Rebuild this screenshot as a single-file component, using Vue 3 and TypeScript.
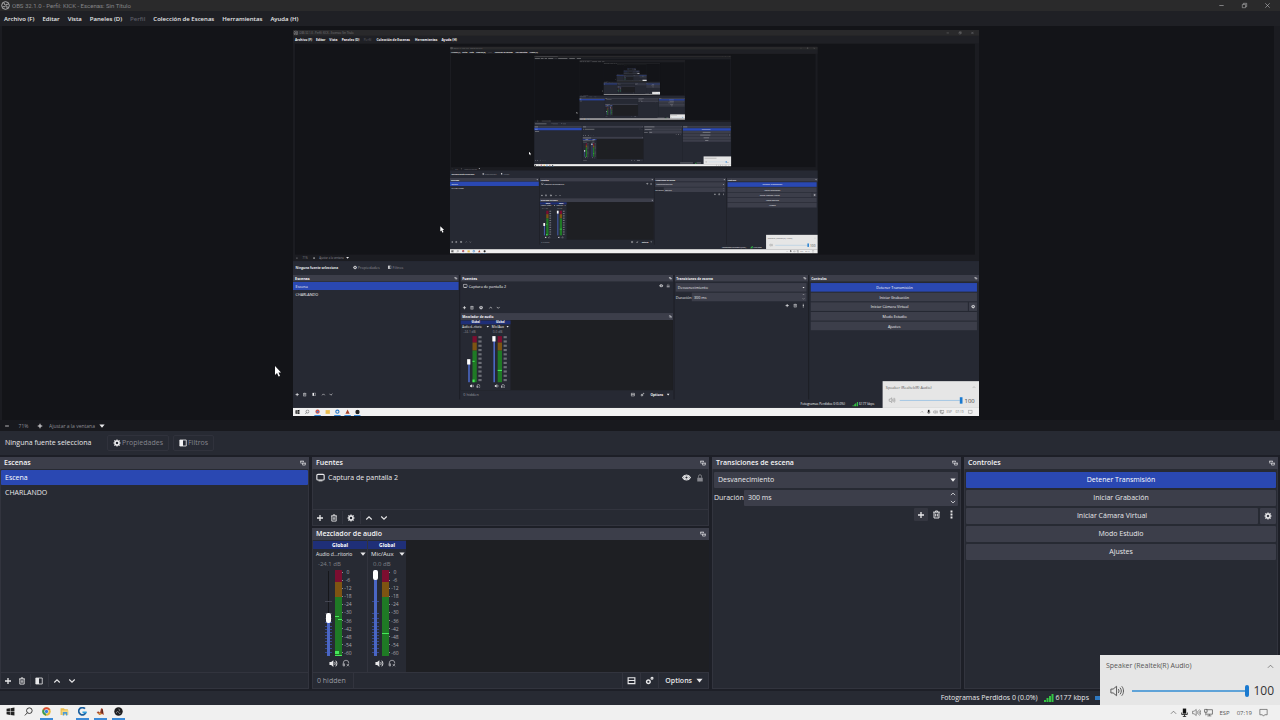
<script setup lang="ts">
import { h, ref } from 'vue'
import type { FunctionalComponent } from 'vue'

type Shape = { d: string; fill?: boolean; w?: number }

const shapes: Record<string, Shape[]> = {
  obs: [
    { d: 'M8 1.2a6.8 6.8 0 1 0 0 13.6A6.8 6.8 0 1 0 8 1.2z', w: 1.4 },
    { d: 'M5.2 3.6c.2 2 1.4 3.2 3.2 3.6M12.8 6.2c-1.8-.8-3.4-.4-4.4 1M10.6 12.6c.6-2 0-3.6-1.6-4.6M3.2 9.6c1.6 1 3.4.8 4.8-.4', w: 1.6 },
  ],
  obsDark: [
    { d: 'M8 .8a7.2 7.2 0 1 0 0 14.4A7.2 7.2 0 1 0 8 .8z', fill: true },
    { d: 'M8 3.500v3M4.500 11l2.500-2M11.500 11L9 9', w: 1 },
  ],
  min: [{ d: 'M3 8h10', w: 1.3 }],
  max: [{ d: 'M3 5.500h7.500v7.500H3zM5.500 5.500V3H13v7.500h-2.500', w: 1.2 }],
  close: [{ d: 'M3 3l10 10M13 3L3 13', w: 1.3 }],
  minus: [{ d: 'M3 8h10', w: 2 }],
  plus: [{ d: 'M8 2v12M2 8h12', w: 2.6 }],
  trash: [{ d: 'M2 3.800h12M6 3.500V1.800h4v1.700M3.600 4v10.200h8.800V4M6.500 6.500v5M9.500 6.500v5', w: 1.7 }],
  gear: [
    { d: 'M8 4a4 4 0 1 0 0 8 4 4 0 1 0 0-8z', w: 3 },
    { d: 'M8 .8v3M8 12.200v3M.8 8h3M12.200 8h3M2.900 2.900l2.200 2.200M10.900 10.900l2.200 2.200M13.100 2.900l-2.200 2.200M5.100 10.900l-2.200 2.200', w: 2.4 },
  ],
  gears: [
    { d: 'M6 7a3.200 3.200 0 1 0 0 6.400A3.200 3.200 0 1 0 6 7z', w: 2.6 },
    { d: 'M12.400 2.200a1.700 1.700 0 1 0 0 3.400 1.700 1.700 0 1 0 0-3.400z', w: 2 },
  ],
  up: [{ d: 'M2.500 11L8 5.500l5.500 5.500', w: 2.2 }],
  down: [{ d: 'M2.500 5L8 10.500 13.500 5', w: 2.2 }],
  caret: [{ d: 'M1 4h14l-7 8.500z', fill: true }],
  dots: [{ d: 'M6.300 1h3.400v3.400H6.300zM6.300 6.300h3.400v3.400H6.300zM6.300 11.600h3.400V15H6.300z', fill: true }],
  filter: [
    { d: 'M1.500 2h13v12h-13z', w: 1.6 },
    { d: 'M2 2h6v12H2z', fill: true },
  ],
  float: [
    { d: 'M1 2h9v2H1zM6 7h9v2H6z', fill: true },
    { d: 'M1.800 2.500v6H5M9.200 3v3M6.800 7.500v6h7.400v-6', w: 1.6 },
  ],
  display: [
    { d: 'M3.500 2.500h9a2 2 0 0 1 2 2v6a2 2 0 0 1-2 2h-9a2 2 0 0 1-2-2v-6a2 2 0 0 1 2-2z', w: 2 },
    { d: 'M4.500 13h7v1.800h-7z', fill: true },
  ],
  eye: [
    { d: 'M1 8c1.600-3 4-4.500 7-4.500S13.400 5 15 8c-1.600 3-4 4.500-7 4.500S2.600 11 1 8z', w: 1.8 },
    { d: 'M8 5.200a2.800 2.800 0 1 0 0 5.600 2.800 2.800 0 1 0 0-5.600z', w: 1.8 },
    { d: 'M3 6l2-1.500v7L3 10zM13 6l-2-1.500v7l2-1.500z', fill: true },
  ],
  lock: [
    { d: 'M2.500 7.500h11V15h-11z', fill: true },
    { d: 'M5 7.500V4.500a3 3 0 0 1 6 0v3', w: 1.7 },
  ],
  layout: [{ d: 'M2 3h12v10.500H2zM2 8h12', w: 2 }],
  speaker: [
    { d: 'M.8 5.500h3l4-3.500v12l-4-3.500h-3z', fill: true },
    { d: 'M10 5.500c1.200 1.600 1.200 3.400 0 5M12 3c2.600 3 2.600 7 0 10', w: 1.7 },
  ],
  monitor: [
    { d: 'M2.500 13V8a5.500 5.500 0 0 1 11 0v1M2.500 9.500H5V14H2.500zM9.500 10l4.500 4.500M14 10l-4.500 4.500', w: 1.7 },
  ],
  volume: [
    { d: 'M1 5.800h2.600L7.500 2.600v10.800L3.600 10.200H1zM9.500 5.800c1 1.300 1 3.100 0 4.400M11.500 4.200c1.900 2.200 1.900 5.400 0 7.600M13.400 2.600c2.700 3 2.700 7.800 0 10.800', w: 1.1 },
  ],
  thinUp: [{ d: 'M2 11l6-6 6 6', w: 1.5 }],
  mic: [
    { d: 'M5 1h6v9H5z', fill: true },
    { d: 'M3 8v3.500h10V8M8 11.500V15M5 15h6', w: 1.4 },
  ],
  network: [{ d: 'M4 3h11v8H4M1 2.500h4.500v5H1zM3.200 7.500V13M9.500 11v3M6 14h7', w: 1.3 }],
  notice: [{ d: 'M1.500 2.500h13v9.500H10l-2 2.500-2-2.500H1.500z', w: 1.2 }],
  windows: [{ d: 'M1 3l6-.9v5.500H1zM8 2l7-1v6.600H8zM1 8.500h6v5.500L1 13zM8 8.500h7V15l-7-1z', fill: true }],
  search: [{ d: 'M9.500 1.500a5 5 0 1 0 0 10 5 5 0 1 0 0-10zM6 10.200L1.500 15', w: 1.5 }],
}

const Icon: FunctionalComponent<{ name: string }> = (props) =>
  h(
    'svg',
    { class: 'icon', viewBox: '0 0 16 16', 'aria-hidden': 'true' },
    shapes[props.name].map((s) =>
      h('path', {
        d: s.d,
        fill: s.fill ? 'currentColor' : 'none',
        'fill-rule': 'evenodd',
        stroke: s.fill ? 'none' : 'currentColor',
        'stroke-width': s.w ?? 1.5,
      }),
    ),
  )
Icon.props = ['name']

const menus = [
  { label: 'Archivo (F)' },
  { label: 'Editar' },
  { label: 'Vista' },
  { label: 'Paneles (D)' },
  { label: 'Perfil', disabled: true },
  { label: 'Colección de Escenas' },
  { label: 'Herramientas' },
  { label: 'Ayuda (H)' },
]
const scenes = ['Escena', 'CHARLANDO']
const activeScene = ref('Escena')
const zoomMode = ref('Ajustar a la ventana')
const transition = ref('Desvanecimiento')
const duration = ref('300 ms')
const volume = ref(100)

const channels = ref([
  { name: 'Audio d...ritorio', db: '-24.1 dB', level: 43, wide: true, peaks: [46, 49, 81, 85] },
  { name: 'Mic/Aux', db: '0.0 dB', level: 100, wide: false, peaks: [63] },
])
const scale = [0, -6, -12, -18, -24, -30, -36, -42, -48, -54, -60]
const ticks = [31, 43, 48, 52, 56, 59, 62, 65, 68, 71, 74, 78, 82]

// Nested copies of the captured desktop, each drawn in 1280 x 720 units.
const ratio = 0.536
const levels = Array.from({ length: 8 }, (_, n) => {
  const s = ratio ** n
  const offset = (1 - s) / (1 - ratio)
  return { n, x: 293 * offset, y: 31 * offset, w: 1280 * s, h: 720 * s }
})

type Box = [number, number, number, number, string]
const boxes: Box[] = [
  [0, 0, 1280, 720, '#1b1c21'],
  [0, 0, 1280, 11, '#29292b'],
  [0, 11, 1280, 14, '#1f2025'],
  [4, 26, 1268, 393, '#131418'],
  [0, 431, 1280, 274, '#262933'],
  [0, 457, 309, 12, '#3c3e4a'],
  [313, 457, 396, 12, '#3c3e4a'],
  [712, 457, 249, 12, '#3c3e4a'],
  [964, 457, 316, 12, '#3c3e4a'],
  [313, 528, 396, 13, '#3c3e4a'],
  [0, 470, 309, 15, '#2a48b2'],
  [313, 541, 396, 131, '#1e1f23'],
  [313, 541, 93, 131, '#262933'],
  [313, 542, 93, 7, '#1f2f78'],
  [310, 457, 2, 232, '#1d1f26'],
  [710, 457, 2, 232, '#1d1f26'],
  [961, 457, 2, 232, '#1d1f26'],
  [714, 472, 244, 16, '#3c3e4a'],
  [744, 490, 214, 16, '#3c3e4a'],
  [966, 472, 310, 16, '#2a48b2'],
  [966, 490, 310, 16, '#3c3e4a'],
  [966, 508, 293, 16, '#3c3e4a'],
  [1261, 508, 15, 16, '#3c3e4a'],
  [966, 526, 310, 16, '#3c3e4a'],
  [966, 544, 310, 16, '#3c3e4a'],
  [335, 571, 8, 12, '#7c0e30'],
  [335, 583, 8, 15, '#7e5412'],
  [335, 598, 8, 59, '#1f7a25'],
  [382, 571, 8, 12, '#7c0e30'],
  [382, 583, 8, 15, '#7e5412'],
  [382, 598, 8, 59, '#1f7a25'],
  [335, 617, 4, 2, '#46e85a'],
  [335, 652, 4, 5, '#46e85a'],
  [382, 634, 8, 2, '#46e85a'],
  [327, 620, 3, 37, '#4a66c4'],
  [374, 572, 3, 85, '#4a66c4'],
  [325, 614, 6, 10, '#ffffff'],
  [372, 571, 6, 10, '#ffffff'],
  [0, 705, 1280, 15, '#f0f0f0'],
  [1100, 655, 180, 50, '#e6e6e6'],
  [1132, 690, 112, 2, '#a9c9e4'],
  [1244, 685, 5, 12, '#1a7ad0'],
]
type Label = [number, number, string, string, number, boolean?]
const labels: Label[] = [
  [12, 8, 'OBS 32.1.0 - Perfil: KICK - Escenas: Sin Título', '#77777a', 5],
  [4, 21, 'Archivo (F)', '#f4f4f6', 6, true],
  [43, 21, 'Editar', '#f4f4f6', 6, true],
  [68, 21, 'Vista', '#f4f4f6', 6, true],
  [91, 21, 'Paneles (D)', '#f4f4f6', 6, true],
  [132, 21, 'Perfil', '#606168', 6],
  [156, 21, 'Colección de Escenas', '#f4f4f6', 6, true],
  [228, 21, 'Herramientas', '#f4f4f6', 6, true],
  [277, 21, 'Ayuda (H)', '#f4f4f6', 6, true],
  [18, 428, '71%', '#8d8e95', 5],
  [49, 428, 'Ajustar a la ventana', '#8d8e95', 5],
  [5, 446, 'Ninguna fuente selecciona', '#e8e8ea', 6, true],
  [121, 446, 'Propiedades', '#8d8e95', 7],
  [186, 446, 'Filtros', '#8d8e95', 7],
  [4, 466, 'Escenas', '#f4f4f6', 7, true],
  [316, 466, 'Fuentes', '#f4f4f6', 7, true],
  [715, 466, 'Transiciones de escena', '#f4f4f6', 6, true],
  [967, 466, 'Controles', '#f4f4f6', 6, true],
  [316, 538, 'Mezclador de audio', '#f4f4f6', 6, true],
  [5, 481, 'Escena', '#f4f4f6', 7],
  [5, 496, 'CHARLANDO', '#f4f4f6', 7],
  [328, 481, 'Captura de pantalla 2', '#f4f4f6', 7],
  [718, 483, 'Desvanecimiento', '#e8e8ea', 7],
  [714, 501, 'Duración', '#e8e8ea', 7],
  [748, 501, '300 ms', '#e8e8ea', 7],
  [1088, 483, 'Detener Transmisión', '#ffffff', 7],
  [1094, 501, 'Iniciar Grabación', '#f4f4f6', 7],
  [1078, 519, 'Iniciar Cámara Virtual', '#f4f4f6', 7],
  [1100, 537, 'Modo Estudio', '#f4f4f6', 7],
  [1110, 555, 'Ajustes', '#f4f4f6', 7],
  [333, 547, 'Global', '#ffffff', 5, true],
  [379, 547, 'Global', '#ffffff', 5, true],
  [316, 556, 'Audio d...ritorio', '#f4f4f6', 5],
  [371, 556, 'Mic/Aux', '#f4f4f6', 6],
  [318, 566, '-24.1 dB', '#8d8e95', 6],
  [373, 566, '0.0 dB', '#8d8e95', 6],
  [318, 683, '0 hidden', '#9a9ba2', 7],
  [667, 683, 'Options', '#f4f4f6', 6, true],
  [947, 700, 'Fotogramas Perdidos 0 (0.0%)', '#f4f4f6', 6],
  [1056, 700, '6177 kbps', '#f4f4f6', 6],
  [1106, 669, 'Speaker (Realtek(R) Audio)', '#5a5a5a', 7],
  [1253, 696, '100', '#444444', 11],
  [1219, 715, 'ESP', '#777777', 6],
  [1236, 715, '07:19', '#777777', 6],
]
type Mark = [string, number, number, number, string]
const lt = '#f0f0f2'
const marks: Mark[] = [
  ['obs', 1, 1, 9, '#b5b5b8'],
  ['min', 1218, 2, 7, '#a5a5a8'],
  ['max', 1241, 2, 7, '#a5a5a8'],
  ['close', 1264, 2, 7, '#a5a5a8'],
  ['minus', 5, 423, 5, lt],
  ['plus', 37, 423, 5, lt],
  ['caret', 99, 422, 6, lt],
  ['gear', 112, 439, 8, lt],
  ['filter', 177, 439, 7, lt],
  ['float', 301, 460, 6, lt],
  ['float', 701, 460, 6, lt],
  ['float', 952, 460, 6, lt],
  ['float', 1271, 460, 6, lt],
  ['float', 701, 532, 6, lt],
  ['display', 317, 473, 9, lt],
  ['eye', 683, 473, 8, lt],
  ['lock', 696, 473, 8, '#8d8e95'],
  ['plus', 316, 514, 8, lt],
  ['trash', 330, 514, 8, lt],
  ['gear', 347, 514, 8, lt],
  ['up', 365, 514, 8, lt],
  ['down', 379, 514, 8, lt],
  ['caret', 361, 551, 5, lt],
  ['caret', 398, 551, 5, lt],
  ['caret', 950, 478, 5, lt],
  ['up', 950, 491, 5, lt],
  ['down', 950, 499, 5, lt],
  ['plus', 918, 510, 8, lt],
  ['trash', 933, 510, 8, lt],
  ['dots', 948, 510, 8, lt],
  ['gear', 1265, 512, 8, lt],
  ['speaker', 330, 660, 8, lt],
  ['monitor', 342, 660, 8, lt],
  ['speaker', 376, 660, 8, lt],
  ['monitor', 388, 660, 8, lt],
  ['plus', 4, 676, 8, lt],
  ['trash', 18, 676, 8, lt],
  ['filter', 36, 676, 7, lt],
  ['up', 53, 676, 8, lt],
  ['down', 67, 676, 8, lt],
  ['layout', 630, 676, 8, lt],
  ['gears', 648, 676, 8, lt],
  ['caret', 697, 677, 6, lt],
  ['volume', 1111, 684, 13, '#777777'],
  ['thinUp', 1267, 663, 7, '#777777'],
  ['windows', 4, 708, 9, '#111111'],
  ['search', 22, 708, 9, '#333333'],
  ['obsDark', 116, 708, 9, '#222222'],
  ['thinUp', 1170, 709, 7, '#555555'],
  ['mic', 1182, 708, 8, '#111111'],
  ['volume', 1194, 708, 9, '#555555'],
  ['network', 1206, 708, 9, '#555555'],
  ['notice', 1259, 708, 9, '#555555'],
]
</script>

<template>
  <div class="desktop">
    <header class="titlebar">
      <Icon name="obs" class="app-icon" />
      <span class="title">OBS 32.1.0 - Perfil: KICK - Escenas: Sin Título</span>
      <button class="win-btn" aria-label="Minimizar"><Icon name="min" class="i7" /></button>
      <button class="win-btn" aria-label="Restaurar"><Icon name="max" class="i7" /></button>
      <button class="win-btn" aria-label="Cerrar"><Icon name="close" class="i7" /></button>
    </header>

    <nav class="menubar">
      <button v-for="m in menus" :key="m.label" :disabled="m.disabled">{{ m.label }}</button>
    </nav>

    <main class="preview">
      <svg class="capture" viewBox="0 0 1280 720" role="img" aria-label="Captura de pantalla 2">
        <svg
          v-for="l in levels"
          :key="l.n"
          :x="l.x"
          :y="l.y"
          :width="l.w"
          :height="l.h"
          viewBox="0 0 1280 720"
        >
          <rect v-for="(b, i) in boxes" :key="i" :x="b[0]" :y="b[1]" :width="b[2]" :height="b[3]" :fill="b[4]" />
          <template v-if="l.n < 2">
            <text
              v-for="(t, i) in labels"
              :key="i"
              :x="t[0]"
              :y="t[1]"
              :fill="t[3]"
              :font-size="t[4]"
              :font-weight="t[5] ? 700 : 400"
            >{{ t[2] }}</text>
          </template>
          <template v-else>
            <rect
              v-for="(t, i) in labels"
              :key="i"
              :x="t[0]"
              :y="t[1] - 5"
              :width="t[2].length * 3"
              height="5"
              :fill="t[3]"
              opacity="0.4"
            />
          </template>
          <g v-if="l.n < 4">
            <svg
              v-for="(m, i) in marks"
              :key="i"
              :x="m[1]"
              :y="m[2]"
              :width="m[3]"
              :height="m[3]"
              viewBox="0 0 16 16"
            >
              <path
                v-for="(s, k) in shapes[m[0]]"
                :key="k"
                :d="s.d"
                :fill="s.fill ? m[4] : 'none'"
                :stroke="s.fill ? 'none' : m[4]"
                :stroke-width="s.w ?? 1.5"
                fill-rule="evenodd"
              />
            </svg>
            <path d="M1044 700h2v2h-2zM1047 698h2v4h-2zM1049 696h2v6h-2zM1052 694h2v8h-2z" fill="#35c544" />
            <circle cx="46" cy="712" r="4" fill="#d9503c" />
            <circle cx="46" cy="712" r="2" fill="#3b7fe0" />
            <rect x="61" y="709" width="8" height="7" fill="#e9bd4f" />
            <circle cx="83" cy="712" r="3" fill="none" stroke="#2878c8" stroke-width="2" />
            <path d="M98 716l4-8 4 8z" fill="#a5432a" />
            <path d="M40 718h12v2H40zM77 718h12v2H77zM96 718h12v2H96zM114 718h12v2h-12z" fill="#3a8ad8" />
            <g v-for="x in [347, 394]" :key="x">
              <rect v-for="k in 11" :key="k" :x="x - 1" :y="563 + k * 8" width="6" height="4" fill="#8d8e95" opacity="0.7" />
            </g>
          </g>
          <path d="M275 366v10l2-2 2 4 2-1-2-4h3z" fill="#ffffff" />
        </svg>
      </svg>
    </main>

    <div class="zoombar">
      <button aria-label="Alejar"><Icon name="minus" class="i6" /></button>
      <span class="zoom-value">71%</span>
      <button aria-label="Acercar"><Icon name="plus" class="i6" /></button>
      <span class="select-wrap zoom-select">
        <select v-model="zoomMode" aria-label="Modo de escala">
          <option>Ajustar a la ventana</option>
        </select>
        <Icon name="caret" class="i6 caret" />
      </span>
    </div>

    <div class="source-bar">
      <span class="source-name">Ninguna fuente selecciona</span>
      <button class="ghost"><Icon name="gear" class="i8 white" />Propiedades</button>
      <button class="ghost"><Icon name="filter" class="i8 white" />Filtros</button>
    </div>

    <div class="docks">
      <section class="dock">
        <h2>Escenas<button aria-label="Desacoplar Escenas"><Icon name="float" class="i6" /></button></h2>
        <ul class="scenes">
          <li v-for="s in scenes" :key="s">
            <button :class="{ active: s === activeScene }" @click="activeScene = s">{{ s }}</button>
          </li>
        </ul>
        <div class="tools">
          <button aria-label="Añadir escena"><Icon name="plus" class="i8" /></button>
          <button aria-label="Eliminar escena"><Icon name="trash" class="i8" /></button>
          <button class="sep" aria-label="Filtros de escena"><Icon name="filter" class="i8" /></button>
          <button class="sep" aria-label="Subir escena"><Icon name="up" class="i8" /></button>
          <button aria-label="Bajar escena"><Icon name="down" class="i8" /></button>
        </div>
      </section>

      <div class="stack">
        <section class="dock sources">
          <h2>Fuentes<button aria-label="Desacoplar Fuentes"><Icon name="float" class="i6" /></button></h2>
          <div class="source-list">
            <div class="source">
              <Icon name="display" class="i9" />
              <span>Captura de pantalla 2</span>
              <button aria-label="Visibilidad"><Icon name="eye" class="i9" /></button>
              <button class="dim" aria-label="Bloquear"><Icon name="lock" class="i8" /></button>
            </div>
          </div>
          <div class="tools">
            <button aria-label="Añadir fuente"><Icon name="plus" class="i8" /></button>
            <button aria-label="Eliminar fuente"><Icon name="trash" class="i8" /></button>
            <button class="sep" aria-label="Propiedades de la fuente"><Icon name="gear" class="i8" /></button>
            <button class="sep" aria-label="Subir fuente"><Icon name="up" class="i8" /></button>
            <button aria-label="Bajar fuente"><Icon name="down" class="i8" /></button>
          </div>
        </section>

        <section class="dock mixer">
          <h2>Mezclador de audio<button aria-label="Desacoplar Mezclador"><Icon name="float" class="i6" /></button></h2>
          <div class="channels">
            <div v-for="c in channels" :key="c.name" class="channel" :class="{ wide: c.wide }">
              <div class="global">Global</div>
              <button class="channel-name"><span>{{ c.name }}</span><Icon name="caret" class="i6" /></button>
              <div class="db">{{ c.db }}</div>
              <div class="meter-row">
                <div class="fader">
                  <svg class="fader-track" viewBox="0 0 9 86" aria-hidden="true">
                    <rect x="4" y="1" width="1" height="84" fill="#15161a" />
                    <rect v-for="t in ticks" :key="t" x="1" :y="t" width="7" height="1" :fill="t > 86 - c.level * 0.86 ? '#35488f' : '#454753'" />
                    <rect x="3" :y="86 - c.level * 0.86" width="3" :height="c.level * 0.86" fill="#4a66c4" />
                  </svg>
                  <input v-model.number="c.level" type="range" min="0" max="100" :aria-label="'Volumen de ' + c.name" />
                </div>
                <svg class="meter" viewBox="0 0 9 86" aria-hidden="true">
                  <rect x="1" y="0" width="7" height="12" fill="#7c0e30" />
                  <rect x="1" y="12" width="7" height="15" fill="#7e5412" />
                  <rect x="1" y="27" width="7" height="59" fill="#1f7a25" />
                  <rect v-for="(p, i) in c.peaks" :key="p" :x="i === 1 ? 4 : 1" :y="p" :width="c.peaks.length > 1 && i < 3 ? 4 : 7" :height="i === 2 ? 3 : 1" fill="#46e85a" />
                  <rect v-for="k in 11" :key="k" x="8" :y="k * 8 - 6" width="1" height="1" fill="#8d8e95" />
                </svg>
                <div class="scale"><span v-for="n in scale" :key="n">{{ n }}</span></div>
              </div>
              <div class="channel-btns">
                <button aria-label="Silenciar"><Icon name="speaker" class="i9" /></button>
                <button aria-label="Monitorizar"><Icon name="monitor" class="i8 gray" /></button>
              </div>
            </div>
          </div>
          <div class="mixer-foot">
            <button class="hidden-count">0 hidden</button>
            <button class="foot-btn" aria-label="Disposición"><Icon name="layout" class="i9" /></button>
            <button class="foot-btn" aria-label="Propiedades avanzadas"><Icon name="gears" class="i9" /></button>
            <button class="options">Options<Icon name="caret" class="i7" /></button>
          </div>
        </section>
      </div>

      <section class="dock">
        <h2>Transiciones de escena<button aria-label="Desacoplar Transiciones"><Icon name="float" class="i6" /></button></h2>
        <div class="form">
          <span class="select-wrap field">
            <select v-model="transition" aria-label="Transición"><option>Desvanecimiento</option></select>
            <Icon name="caret" class="i6 caret" />
          </span>
          <div class="duration">
            <label for="duration">Duración</label>
            <div class="field spin">
              <input id="duration" v-model="duration" type="text" />
              <span class="steps">
                <button aria-label="Aumentar"><Icon name="up" class="i6" /></button>
                <button aria-label="Reducir"><Icon name="down" class="i6" /></button>
              </span>
            </div>
          </div>
          <div class="transition-tools">
            <button class="boxed" aria-label="Añadir transición"><Icon name="plus" class="i8" /></button>
            <button aria-label="Eliminar transición"><Icon name="trash" class="i9" /></button>
            <button aria-label="Más opciones"><Icon name="dots" class="i9" /></button>
          </div>
        </div>
      </section>

      <section class="dock">
        <h2>Controles<button aria-label="Desacoplar Controles"><Icon name="float" class="i6" /></button></h2>
        <div class="controls">
          <button class="primary">Detener Transmisión</button>
          <button>Iniciar Grabación</button>
          <div class="pair">
            <button>Iniciar Cámara Virtual</button>
            <button class="cog" aria-label="Configurar cámara virtual"><Icon name="gear" class="i8" /></button>
          </div>
          <button>Modo Estudio</button>
          <button>Ajustes</button>
        </div>
      </section>
    </div>

    <footer class="status">
      <span>Fotogramas Perdidos 0 (0.0%)</span>
      <span class="rate">
        <svg class="signal" viewBox="0 0 10 8" aria-hidden="true">
          <path d="M0 6h2v2H0zM2.500 4h2v4h-2zM5 2h2v6H5zM7.500 0h2v8h-2z" fill="#35c544" />
        </svg>
        6177 kbps
      </span>
      <i class="cpu"></i>
    </footer>

    <div class="taskbar">
      <div class="apps">
        <button aria-label="Inicio"><Icon name="windows" class="i9" /></button>
        <button aria-label="Buscar"><Icon name="search" class="i9" /></button>
        <button class="open" aria-label="Chrome">
          <svg class="i9" viewBox="0 0 16 16">
            <circle cx="8" cy="8" r="7.500" fill="#e8b93a" />
            <path d="M8 8L1.500 4.200A7.500 7.500 0 0 1 14.500 4.200L14.800 5H8z" fill="#d94a3a" />
            <path d="M8 8L1.500 4.200A7.500 7.500 0 0 0 7 15.400z" fill="#3a9a55" />
            <circle cx="8" cy="8" r="3.800" fill="#fff" />
            <circle cx="8" cy="8" r="2.900" fill="#3b7fe0" />
          </svg>
        </button>
        <button aria-label="Explorador">
          <svg class="i9" viewBox="0 0 16 16">
            <path d="M1 2h6l1.500 2H14v10H1z" fill="#e9bd4f" />
            <path d="M3 6h12v8H3z" fill="#f6d981" />
            <path d="M5 9h8v6h-2.500v-3h-3v3H5z" fill="#4b9bd6" />
          </svg>
        </button>
        <button class="open" aria-label="Logitech G">
          <svg class="i9" viewBox="0 0 16 16">
            <path d="M12.500 3A6.500 6.500 0 1 0 14 9.500" fill="none" stroke="#1b5f9e" stroke-width="3" />
            <path d="M8 8h7.500v3H8z" fill="#2fa0e0" />
          </svg>
        </button>
        <button class="open" aria-label="Juego">
          <svg class="i9" viewBox="0 0 16 16">
            <path d="M1 9l4-1 2 2 2-8 3 1 2 11-4-2-4 2z" fill="#a5432a" />
            <path d="M2 12l6-2 2 4z" fill="#d99a3a" />
            <path d="M10 4l2 1v6l-2-1z" fill="#4a211a" />
          </svg>
        </button>
        <button class="open" aria-label="OBS">
          <svg class="i9" viewBox="0 0 16 16">
            <circle cx="8" cy="8" r="7.500" fill="#1d1d1f" />
            <path d="M8 3.500c2 .4 2.400 2.400 1 4M4.500 11c-.6-2 1-3.400 3-2.800M11.600 11c-1.600 1.200-3.200.4-3.400-1.800" fill="none" stroke="#b8b8ba" stroke-width="1.200" />
          </svg>
        </button>
      </div>
      <div class="tray">
        <button aria-label="Iconos ocultos"><Icon name="thinUp" class="i7" /></button>
        <button aria-label="Micrófono" class="black"><Icon name="mic" class="i9" /></button>
        <button aria-label="Volumen"><Icon name="volume" class="i9" /></button>
        <button aria-label="Red"><Icon name="network" class="i9" /></button>
        <span class="lang">ESP</span>
        <time>07:19</time>
        <button aria-label="Notificaciones"><Icon name="notice" class="i9" /></button>
      </div>
    </div>

    <aside class="volume">
      <div class="volume-head">
        <label for="volume">Speaker (Realtek(R) Audio)</label>
        <button aria-label="Expandir"><Icon name="thinUp" class="i7" /></button>
      </div>
      <div class="volume-body">
        <Icon name="volume" class="i14" />
        <input id="volume" v-model.number="volume" type="range" min="0" max="100" />
        <output for="volume">{{ volume }}</output>
      </div>
    </aside>

    <svg class="pointer" viewBox="0 0 6 11" aria-hidden="true">
      <path d="M0 0v9l2-2 1.600 3.500 1.400-.6L3.500 6.500H6z" fill="#fff" />
    </svg>
  </div>
</template>

<style>
html,
body {
  background: #1b1c21;
}
.icon {
  display: block;
  flex: none;
}
</style>

<style scoped>
.desktop {
  position: relative;
  display: flex;
  flex-direction: column;
  min-height: 100vh;
  background: #1b1c21;
  color: #e8e8ea;
  font: 7px/10px 'Open Sans', 'Noto Sans', sans-serif;
  overflow: hidden;
}
.desktop * {
  box-sizing: border-box;
}
button,
input,
select {
  margin: 0;
  padding: 0;
  border: 0;
  background: none;
  color: inherit;
  font: inherit;
  border-radius: 0;
  outline: none;
}
button {
  display: flex;
  align-items: center;
  justify-content: center;
  white-space: nowrap;
}
.i6 { width: 6px; height: 6px; }
.i7 { width: 7px; height: 7px; }
.i8 { width: 8px; height: 8px; }
.i9 { width: 9px; height: 9px; }
.i14 { width: 14px; height: 14px; }
.white { color: #f0f0f2; }
.gray { color: #a5a6ac; }

.titlebar {
  display: flex;
  align-items: center;
  height: 11px;
  padding: 0 1px;
  background: #2a2a2b;
  color: #98989b;
  font: 6px/10px Roboto, 'Open Sans', sans-serif;
}
.app-icon {
  width: 9px;
  height: 9px;
  margin-right: 2px;
  color: #d0d0d2;
}
.title {
  flex: 1;
  color: #858588;
}
.win-btn {
  width: 23px;
  height: 11px;
  color: #c0c0c2;
}
.menubar {
  display: flex;
  gap: 8px;
  height: 15px;
  padding: 0 4px;
  background: #1f2025;
  font-size: 6px;
  font-weight: 600;
}
.menubar button:disabled {
  color: #5d5e65;
}

.preview {
  display: flex;
  flex: 1 1 300px;
  min-height: 0;
  margin: 0 6px 0 2px;
  padding: 4px 4px 4px 0;
  background: #131418;
}
.capture {
  flex: 1;
  min-width: 0;
  width: 100%;
  height: 386px;
}

.zoombar {
  display: flex;
  align-items: center;
  height: 11px;
  padding: 0 4px;
  background: #18191e;
  color: #e8e8ea;
  font-size: 5px;
}
.zoom-value {
  width: 27px;
  color: #8d8e95;
  text-align: center;
}
.select-wrap {
  position: relative;
  display: flex;
  align-items: center;
}
.select-wrap select {
  width: 100%;
  appearance: none;
}
.caret {
  position: absolute;
  right: 2px;
  pointer-events: none;
}
.zoom-select {
  width: 58px;
  margin-left: 6px;
  color: #e8e8ea;
}
.zoom-select select {
  color: #8d8e95;
}

.source-bar {
  display: flex;
  align-items: center;
  gap: 4px;
  height: 26px;
  padding: 0 5px;
  background: #272a33;
  border-bottom: 2px solid #1d1f27;
}
.source-name {
  width: 98px;
}
.ghost {
  gap: 1px;
  height: 16px;
  padding: 0 5px;
  border: 1px solid #30323c;
  border-radius: 2px;
  color: #85868d;
}

.docks {
  display: grid;
  grid-template-columns: 309fr 397fr 249fr 314fr;
  gap: 3px;
  min-height: 232px;
  padding-right: 2px;
  background: #1d1f27;
}
.dock {
  display: flex;
  flex-direction: column;
  background: #272a33;
  border: solid #32343e;
  border-width: 0 1px 1px;
  min-width: 0;
}
.dock h2 {
  display: flex;
  align-items: center;
  justify-content: space-between;
  height: 12px;
  margin: 0 -1px;
  padding: 0 3px 0 4px;
  background: #3c3e4a;
  color: #f4f4f6;
  font-size: 7px;
  font-weight: 600;
}
.stack {
  display: flex;
  flex-direction: column;
  gap: 2px;
  min-width: 0;
}
.scenes {
  flex: 1;
  margin: 0;
  padding: 1px 0 0;
  list-style: none;
}
.scenes button {
  justify-content: flex-start;
  width: 100%;
  height: 15px;
  padding: 0 4px;
  border-radius: 1px;
}
.scenes .active {
  background: #2a48b2;
  color: #fff;
}
.tools {
  display: flex;
  align-items: center;
  height: 16px;
  border-top: 1px solid #32343e;
}
.tools button {
  width: 14px;
  height: 13px;
}
.tools .sep {
  margin-left: 1px;
  width: 17px;
  border-left: 1px solid #32343e;
}
.source-list {
  flex: 1;
}
.source {
  display: flex;
  align-items: center;
  gap: 3px;
  height: 17px;
  padding: 0 4px 0 3px;
}
.source span {
  flex: 1;
}
.source button + button {
  margin-left: 2px;
}
.dim {
  color: #85868d;
}
.sources {
  height: 69px;
}
.mixer {
  flex: 1;
}
.channels {
  display: flex;
  flex: 1;
  margin-right: -1px;
  background: #1e1f23;
}
.channel {
  width: 38px;
  padding-top: 1px;
  background: #272a33;
}
.channel.wide {
  width: 55px;
  border-right: 1px solid #32343e;
}
.global {
  height: 8px;
  background: #1f2f78;
  color: #fff;
  font-size: 5px;
  line-height: 8px;
  font-weight: 700;
  text-align: center;
}
.channel-name {
  justify-content: space-between;
  width: 100%;
  height: 10px;
  padding: 0 1px 0 3px;
  font-size: 6px;
  line-height: 8px;
}
.wide .channel-name {
  font-size: 5px;
}
.db {
  height: 11px;
  padding-left: 5px;
  color: #7f8087;
  font-size: 6px;
}
.meter-row {
  display: flex;
  height: 86px;
  padding-left: 3px;
}
.wide .meter-row {
  padding-left: 11px;
}
.fader {
  position: relative;
  width: 9px;
  height: 86px;
}
.fader-track {
  display: block;
  width: 9px;
  height: 86px;
}
.fader input {
  position: absolute;
  inset: 0;
  width: 9px;
  height: 86px;
  appearance: none;
  writing-mode: vertical-lr;
  direction: rtl;
}
.fader input::-webkit-slider-thumb {
  appearance: none;
  width: 5px;
  height: 10px;
  border-radius: 2px;
  background: #fff;
}
.meter {
  width: 9px;
  height: 86px;
  margin-left: 1px;
}
.scale {
  display: flex;
  flex-direction: column;
  justify-content: space-between;
  width: 10px;
  color: #a8a9af;
  font-size: 5px;
  line-height: 5px;
  text-align: center;
}
.channel-btns {
  display: flex;
  align-items: center;
  gap: 4px;
  height: 14px;
  padding-left: 7px;
}
.wide .channel-btns {
  padding-left: 16px;
}
.mixer-foot {
  display: flex;
  align-items: center;
  height: 16px;
  border-top: 1px solid #32343e;
}
.hidden-count {
  width: 41px;
  height: 15px;
  margin-right: auto;
  justify-content: flex-start;
  padding-left: 4px;
  border-right: 1px solid #32343e;
  color: #9a9ba2;
}
.foot-btn {
  width: 18px;
  height: 15px;
  border-left: 1px solid #32343e;
}
.options {
  gap: 4px;
  height: 15px;
  padding: 0 5px 0 6px;
  border-left: 1px solid #32343e;
  font-weight: 600;
}
.form {
  display: flex;
  flex-direction: column;
  gap: 2px;
  padding: 3px 2px 0 1px;
}
.field {
  height: 16px;
  background: #3c3e4a;
  border-radius: 1px;
}
.field select {
  height: 16px;
  padding-left: 4px;
}
.duration {
  display: flex;
  align-items: center;
  gap: 1px;
}
.duration label {
  width: 29px;
}
.spin {
  display: flex;
  flex: 1;
}
.spin input {
  flex: 1;
  min-width: 0;
  padding-left: 4px;
}
.steps {
  display: flex;
  flex-direction: column;
  justify-content: space-around;
  width: 10px;
}
.transition-tools {
  display: flex;
  justify-content: flex-end;
  gap: 1px;
}
.transition-tools button {
  width: 14px;
  height: 13px;
}
.transition-tools .boxed {
  background: #343640;
  border-radius: 1px;
}
.controls {
  display: flex;
  flex-direction: column;
  gap: 2px;
  padding: 3px 1px 0;
}
.controls button {
  width: 100%;
  height: 16px;
  background: #3c3e4a;
  border-radius: 1px;
}
.controls .primary {
  background: #2a48b2;
  color: #fff;
}
.pair {
  display: flex;
  gap: 2px;
}
.controls .cog {
  width: 16px;
  flex: none;
}

.status {
  display: flex;
  align-items: center;
  justify-content: flex-end;
  gap: 6px;
  height: 16px;
  padding-right: 180px;
  background: #272a33;
  border-top: 2px solid #1d1f27;
}
.rate {
  display: flex;
  align-items: center;
  gap: 2px;
}
.signal {
  width: 10px;
  height: 8px;
}
.cpu {
  width: 5px;
  height: 4px;
  background: #2e78c0;
}

.taskbar {
  display: flex;
  justify-content: space-between;
  height: 15px;
  background: #f0f0f0;
  color: #222;
}
.apps {
  display: flex;
  gap: 5px;
  padding-left: 4px;
}
.apps button {
  width: 13px;
  height: 15px;
  border-bottom: 2px solid transparent;
}
.apps .open {
  border-bottom-color: #3a8ad8;
}
.tray {
  display: flex;
  align-items: center;
  gap: 3px;
  padding-right: 12px;
  color: #555;
  font-size: 6px;
}
.black {
  color: #111;
}
.lang {
  margin-left: 3px;
}
.tray time {
  margin: 0 4px;
}

.volume {
  position: absolute;
  right: 0;
  bottom: 15px;
  width: 180px;
  height: 50px;
  padding: 6px 6px 0;
  background: #e6e6e6;
  color: #555;
}
.volume-head {
  display: flex;
  align-items: center;
  justify-content: space-between;
  font-size: 7px;
}
.volume-body {
  display: flex;
  align-items: center;
  margin-top: 12px;
  padding-left: 4px;
}
.volume-body input {
  flex: 1;
  min-width: 0;
  height: 14px;
  margin: 0 4px 0 8px;
  appearance: none;
  background: linear-gradient(#5fa3d8, #5fa3d8) center / 100% 2px no-repeat;
}
.volume-body input::-webkit-slider-thumb {
  appearance: none;
  width: 4px;
  height: 12px;
  border-radius: 2px;
  background: #1a7ad0;
}
.volume-body output {
  color: #333;
  font-size: 12px;
  line-height: 16px;
}
.pointer {
  position: absolute;
  left: 275px;
  top: 366px;
  width: 6px;
  height: 11px;
}
</style>
